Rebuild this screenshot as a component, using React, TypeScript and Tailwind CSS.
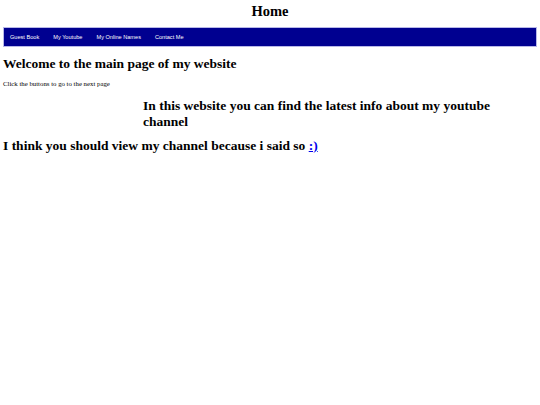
import React from "react";

export default function App() {
  return (
    <div className="min-h-[405px] bg-white px-[3px] text-black" style={{ fontFamily: '"Liberation Serif", serif' }}>
      <h1 className="pt-[2px] text-center text-[14.5px] font-bold leading-[18px]">Home</h1>
      <ul
        className="mt-[7px] flex h-[20px] items-center border border-[#b8b8e8] bg-[#000090] pl-[6px]"
        style={{ fontFamily: '"Liberation Sans", sans-serif' }}
      >
        <li className="mr-[14px] text-[5.6px] text-white">Guest Book</li>
        <li className="mr-[14px] text-[5.6px] text-white">My Youtube</li>
        <li className="mr-[14px] text-[5.6px] text-white">My Online Names</li>
        <li className="text-[5.6px] text-white">Contact Me</li>
      </ul>
      <h2 className="mt-[9px] text-[13.5px] font-bold leading-[16px]">Welcome to the main page of my website</h2>
      <p className="mt-[7px] text-[6.8px] leading-[10px]">Click the buttons to go to the next page</p>
      <h2 className="ml-[140px] mt-[9px] w-[360px] text-[13.5px] font-bold leading-[16px]">
        In this website you can find the latest info about my youtube channel
      </h2>
      <h2 className="mt-[8px] text-[13.5px] font-bold leading-[16px]">
        I think you should view my channel because i said so{" "}
        <a href="#" className="text-[#0000ee] underline">:)</a>
      </h2>
    </div>
  );
}
